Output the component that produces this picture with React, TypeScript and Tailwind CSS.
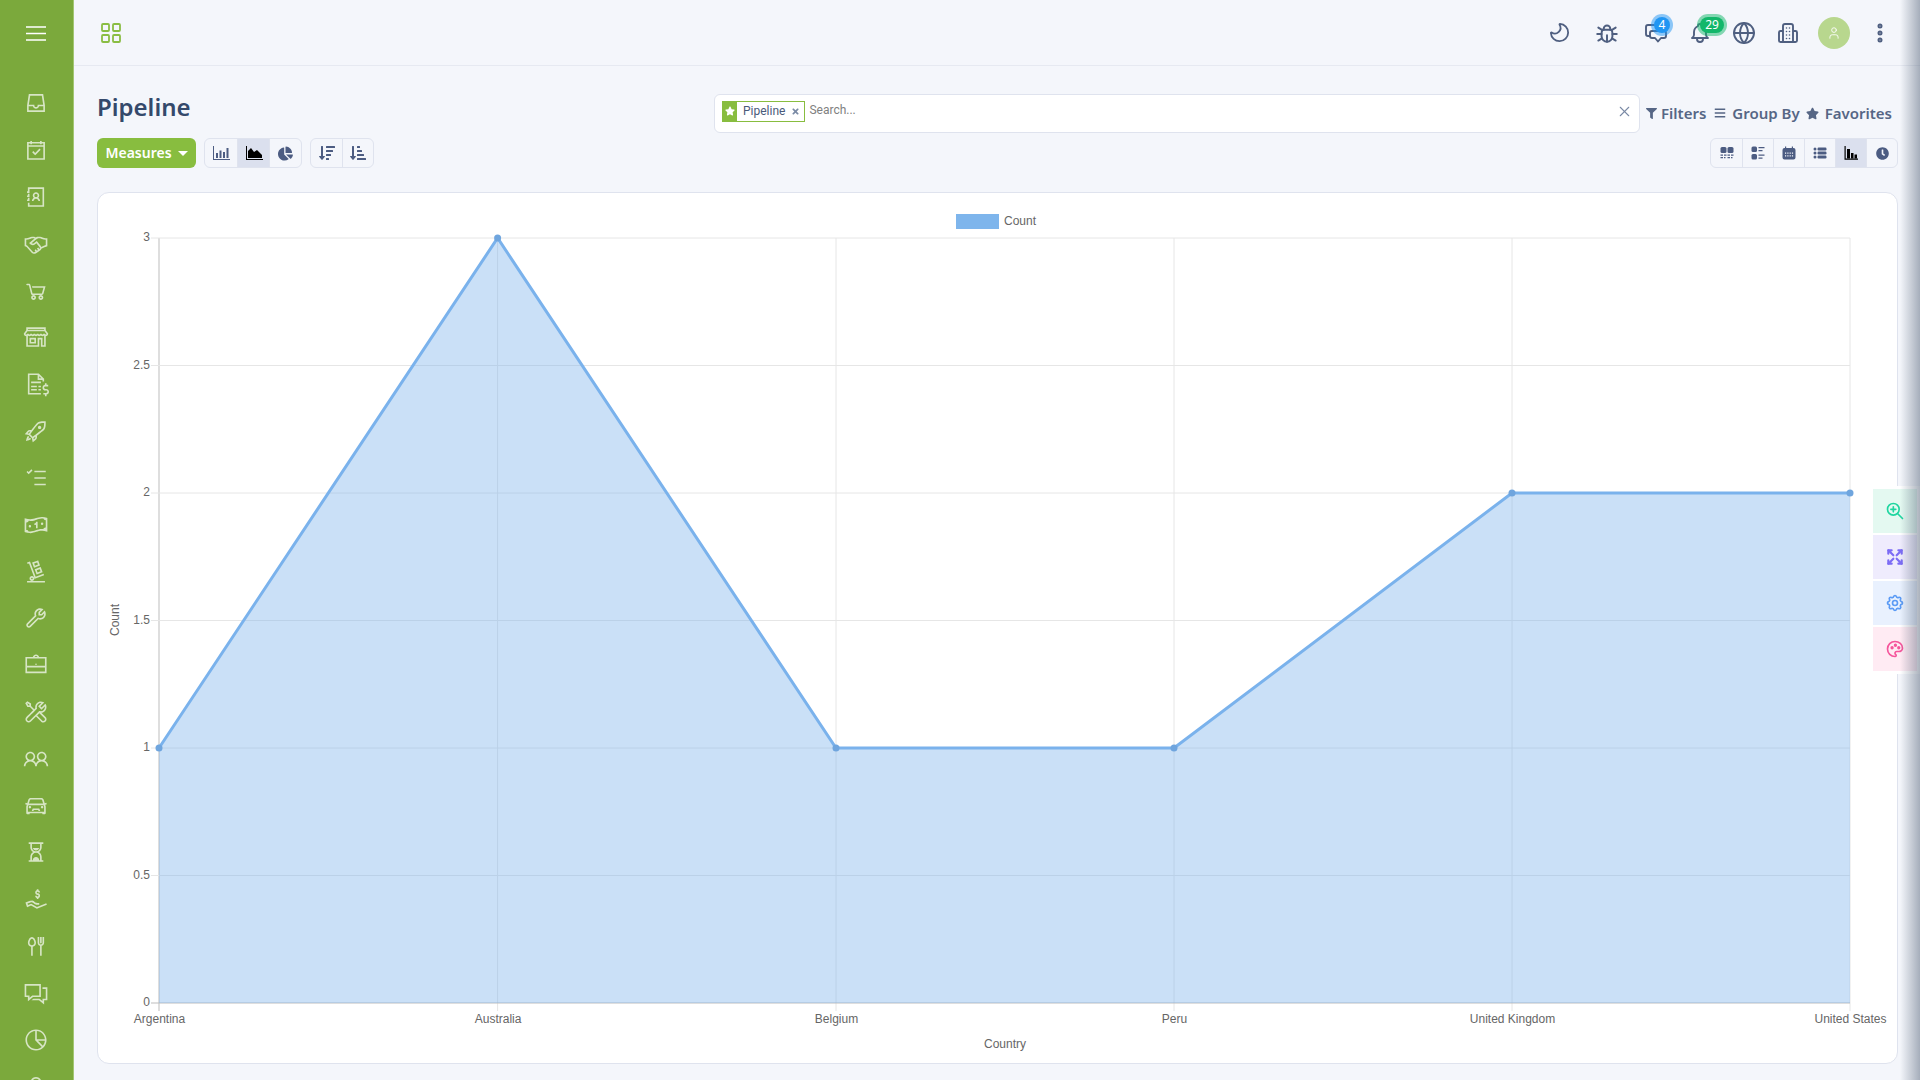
import React from "react";
import { LayoutGrid, X, Moon, Globe, User, EllipsisVertical } from "lucide-react";
import { TbBug, TbBell, TbZoomIn, TbArrowsMaximize, TbSettings, TbPalette } from "react-icons/tb";
import {
  LiaInboxSolid, LiaCalendarCheck, LiaAddressBook, LiaHandshake, LiaShoppingCartSolid, LiaStoreAltSolid,
  LiaFileInvoiceDollarSolid, LiaRocketSolid, LiaTasksSolid, LiaMoneyBillWaveAltSolid, LiaDollySolid,
  LiaWrenchSolid, LiaBriefcaseSolid, LiaToolsSolid, LiaUserFriendsSolid, LiaCarSolid, LiaHourglassHalfSolid,
  LiaHandHoldingUsdSolid, LiaUtensilsSolid, LiaComments, LiaChartPieSolid, LiaUser,
} from "react-icons/lia";
import { FaChartPie, FaSortAmountDown, FaSortAmountDownAlt, FaFilter, FaBars, FaStar, FaTimes, FaClock } from "react-icons/fa";

const navIcons = [
  LiaInboxSolid, LiaCalendarCheck, LiaAddressBook, LiaHandshake, LiaShoppingCartSolid, LiaStoreAltSolid,
  LiaFileInvoiceDollarSolid, LiaRocketSolid, LiaTasksSolid, LiaMoneyBillWaveAltSolid, LiaDollySolid,
  LiaWrenchSolid, LiaBriefcaseSolid, LiaToolsSolid, LiaUserFriendsSolid, LiaCarSolid, LiaHourglassHalfSolid,
  LiaHandHoldingUsdSolid, LiaUtensilsSolid, LiaComments, LiaChartPieSolid, LiaUser,
];

const sans = { fontFamily: '"Noto Sans", sans-serif' };

const BarIcon = () => (
  <svg width="18" height="16" viewBox="0 0 18 16" fill="currentColor">
    <path d="M1 1h1v13h16v1H1z" />
    <rect x="4" y="8" width="2" height="5" />
    <rect x="7.5" y="5.5" width="2" height="7.5" />
    <rect x="11" y="7" width="2" height="6" />
    <rect x="14.5" y="3" width="2" height="10" />
  </svg>
);
const AreaIcon = () => (
  <svg width="18" height="16" viewBox="0 0 18 16" fill="currentColor">
    <path d="M1 1h1v13h16v1H1z" />
    <path d="M3 13V6l3-3 3 4 3-2 4 4 1 1v3z" />
  </svg>
);
const KanbanIcon = () => (
  <svg width="14" height="14" viewBox="0 0 14 14" fill="currentColor">
    <rect x="0.5" y="1" width="6" height="6" rx="1.5" />
    <rect x="7.5" y="1" width="6" height="6" rx="1.5" />
    <path d="M0.5 8.500h2.500v1.200H.5zM4 8.500h2.500v1.200H4zM7.500 8.500H10v1.200H7.500zM11 8.500h2.500v1.200H11zM0.500 11h2.500v1.200H.5zM4 11h1.500v1.200H4zM7.500 11H10v1.200H7.500zM11 11h1.500v1.200H11z" />
  </svg>
);
const ListKanbanIcon = () => (
  <svg width="14" height="14" viewBox="0 0 14 14" fill="currentColor">
    <rect x="0.5" y="0.5" width="5.5" height="5.5" rx="1.5" />
    <rect x="0.5" y="8" width="5.5" height="5.5" rx="1.5" />
    <path d="M7.500 1h6v1.300h-6zM7.500 4h4v1.300h-4zM7.500 8.500h6v1.300h-6zM7.500 11.500h4v1.300h-4z" />
  </svg>
);
const CalendarIcon = () => (
  <svg width="14" height="14" viewBox="0 0 14 14" fill="currentColor">
    <path d="M3 0.500h1.200v1.500h5.600V.5H11V2h.5A2 2 0 0 1 13.500 4v7.500a2 2 0 0 1-2 2h-9a2 2 0 0 1-2-2V4a2 2 0 0 1 2-2H3z" />
    <path d="M3 6.500h1.200v1.200H3zM5.300 6.500h1.200v1.200H5.300zM7.600 6.500h1.200v1.200H7.600zM9.900 6.500h1.200v1.200H9.900zM3 9.300h1.200v1.200H3zM5.300 9.300h1.200v1.200H5.300zM7.600 9.300h1.200v1.200H7.600zM9.900 9.300h1.200v1.200H9.900z" fill="#f4f6fb" />
  </svg>
);
const RowsIcon = () => (
  <svg width="14" height="14" viewBox="0 0 14 14" fill="currentColor">
    <rect x="0.5" y="1.5" width="3" height="3" rx="1.5" />
    <rect x="0.5" y="5.5" width="3" height="3" rx="1.5" />
    <rect x="0.5" y="9.5" width="3" height="3" rx="1.5" />
    <rect x="4.5" y="1.5" width="9" height="3" rx="1.2" />
    <rect x="4.5" y="5.5" width="9" height="3" rx="1.2" />
    <rect x="4.5" y="9.5" width="9" height="3" rx="1.2" />
  </svg>
);
const GraphIcon = () => (
  <svg width="14" height="14" viewBox="0 0 14 14" fill="currentColor">
    <path d="M0.500 0h1.200v12.500H14v1.200H.5z" />
    <rect x="3" y="3" width="3" height="9.5" />
    <rect x="7" y="7" width="2.5" height="5.5" />
    <rect x="10.5" y="8.5" width="2.5" height="4" />
  </svg>
);
const BuildingIcon = () => (
  <svg width="24" height="24" viewBox="0 0 24 24" fill="none" stroke="currentColor" strokeWidth="1.9" strokeLinejoin="round">
    <path d="M7 21V5a2 2 0 0 1 2-2h6a2 2 0 0 1 2 2v16" />
    <path d="M7 10H4.500A1.500 1.500 0 0 0 3 11.500V19.500A1.500 1.500 0 0 0 4.500 21h15a1.500 1.500 0 0 0 1.500-1.500v-8a1.500 1.500 0 0 0-1.500-1.500H17" />
    <path d="M10.500 7h.01M13.500 7h.01M10.500 10.500h.01M13.500 10.500h.01M10.500 14h.01M13.500 14h.01M10.500 17.500h.01M13.500 17.500h.01" strokeLinecap="round" strokeWidth="1.600" />
  </svg>
);
const ChatIcon = () => (
  <svg width="24" height="24" viewBox="0 0 24 24" fill="none" stroke="currentColor" strokeWidth="1.9" strokeLinejoin="round" strokeLinecap="round">
    <path d="M15 4H4a2 2 0 0 0-2 2v7a2 2 0 0 0 2 2h2" />
    <path d="M8 10h12a2 2 0 0 1 2 2v3a2 2 0 0 1-2 2h-3l-3 3.500-3-3.500H8a2 2 0 0 1-2-2v-3a2 2 0 0 1 2-2z" />
  </svg>
);

function Sidebar() {
  return (
    <aside className="w-[74px] shrink-0 bg-[#7ba93c] border-r border-[#a3c673] flex flex-col items-stretch overflow-hidden">
      <div className="h-[66px] shrink-0 flex items-center justify-center pr-0.5">
        <svg width="20" height="15" viewBox="0 0 20 15" className="text-white">
          <path d="M0 1h20M0 7.500h20M0 14h20" stroke="currentColor" strokeWidth="1.600" />
        </svg>
      </div>
      <nav className="mt-3.5 h-[1030px] shrink-0 flex flex-col pr-px">
        {navIcons.map((I, i) => (
          <div key={i} className="flex-1 flex items-center justify-center text-white/70">
            <I size={26} />
          </div>
        ))}
      </nav>
    </aside>
  );
}

function Header() {
  return (
    <header className="h-[66px] shrink-0 border-b border-[#e6e9f1] flex items-center pl-6 pr-7">
      <LayoutGrid size={24} strokeWidth={1.8} className="text-[#8abd43] ml-px" />
      <div className="ml-auto flex items-center gap-5 text-[#4f5f80]">
        <Moon size={23} strokeWidth={1.9} className="mr-1 -scale-x-100" />
        <TbBug size={26} strokeWidth={1.8} className="mr-1 -ml-px" />
        <div className="relative">
          <ChatIcon />
          <span className="absolute -top-1 left-2.5 w-4 h-4 rounded-full bg-[#2196f3] ring-3 ring-[#2196f3]/50 text-white text-xs flex items-center justify-center">4</span>
        </div>
        <div className="relative">
          <TbBell size={24} strokeWidth={1.9} />
          <span className="absolute -top-1 left-3 w-6 h-4 rounded-full bg-[#12b76a] ring-3 ring-[#12b76a]/50 text-white text-xs flex items-center justify-center">29</span>
        </div>
        <Globe size={24} strokeWidth={1.9} />
        <BuildingIcon />
        <div className="w-8 h-8 -ml-0.5 rounded-full bg-[#b8d78e] flex items-center justify-center text-white">
          <User size={14} strokeWidth={1.5} />
        </div>
        <EllipsisVertical size={24} strokeWidth={3} className="-ml-0.5" />
      </div>
    </header>
  );
}

function BtnGroup({ items, active, w }: { items: React.ReactNode[]; active: number; w: string }) {
  return (
    <div className="flex h-[30px] rounded-md border border-[#dfe3ee] overflow-hidden">
      {items.map((it, i) => (
        <div key={i} className={`${w} flex items-center justify-center border-l first:border-l-0 border-[#dfe3ee] ${i === active ? "bg-[#dbe0ee] text-black" : "text-[#4c5c82]"}`}>
          {it}
        </div>
      ))}
    </div>
  );
}

function Toolbar() {
  return (
    <div className="grid grid-cols-[617px_1fr] gap-y-1.5">
      <div className="flex items-center h-[38px] pb-3 text-2xl font-semibold text-[#34496b]" style={sans}>Pipeline</div>
      <div className="flex items-center h-[38px]">
        <div className="w-[926px] h-[39px] rounded-md bg-white border border-[#dfe3ee] flex items-start pt-[6px] pl-[7px] pr-1.5 text-xs" style={{ fontFamily: "Roboto, sans-serif" }}>
          <div className="h-[21px] flex items-center border border-[#88bd3f] bg-white">
            <span className="w-3.5 h-full bg-[#88bd3f] flex items-center justify-center text-white"><FaStar size={10} /></span>
            <span className="pl-1.5 text-[#4a5a7a]">Pipeline</span>
            <FaTimes size={9} className="ml-1.5 mr-1 text-[#7a8aa5]" />
          </div>
          <span className="ml-1 mt-px text-[#808080]">Search...</span>
          <X size={17} strokeWidth={1.5} className="ml-auto mt-0.5 text-[#7a8aa5]" />
        </div>
        <div className="ml-auto mr-1.5 flex items-center gap-1.5 text-[15px] font-semibold text-[#566685]" style={sans}>
          <span className="flex items-center gap-1 mr-0.5"><FaFilter size={11} />Filters</span>
          <span className="flex items-center gap-1.5"><FaBars size={12} />Group By</span>
          <span className="flex items-center gap-1.5"><FaStar size={13} />Favorites</span>
        </div>
      </div>
      <div className="flex gap-2">
        <div className="w-[99px] h-[30px] rounded-md bg-[#88bd3f] text-white text-sm font-semibold flex items-center justify-center gap-1.5" style={sans}>
          Measures
          <span className="w-0 h-0 border-x-[5px] border-x-transparent border-t-[5px] border-t-white" />
        </div>
        <BtnGroup w="w-8" active={1} items={[<BarIcon />, <AreaIcon />, <FaChartPie size={15} />]} />
        <BtnGroup w="w-[31px]" active={-1} items={[<FaSortAmountDown size={16} />, <FaSortAmountDownAlt size={16} />]} />
      </div>
      <div className="flex justify-end">
        <BtnGroup w="w-[31px]" active={4} items={[<KanbanIcon />, <ListKanbanIcon />, <CalendarIcon />, <RowsIcon />, <GraphIcon />, <FaClock size={13} />]} />
      </div>
    </div>
  );
}

const xs = [159, 497.6, 836, 1174, 1512, 1850];
const labels = ["Argentina", "Australia", "Belgium", "Peru", "United Kingdom", "United States"];
const data = [1, 3, 1, 1, 2, 2];
const y = (v: number) => 1003 - v * 255;
const ticks = ["0", "0.5", "1", "1.5", "2", "2.5", "3"];

function Chart() {
  const line = xs.map((x, i) => `${x},${y(data[i])}`).join(" ");
  return (
    <svg viewBox="98 193 1799 870" className="w-full h-full block" style={{ fontFamily: '"Liberation Sans", sans-serif' }}>
      {xs.map((x, i) => (
        <line key={x} x1={x} x2={x} y1={238} y2={1011} stroke={i === 0 ? "#bdbdbd" : "#e6e6e6"} />
      ))}
      {ticks.map((t, i) => (
        <g key={t}>
          <line x1={151} x2={1850} y1={y(i * 0.5)} y2={y(i * 0.5)} stroke={i === 0 ? "#bdbdbd" : "#e6e6e6"} />
          <text x={150} y={y(i * 0.5) + 3} textAnchor="end" fontSize="12" fill="#666">{t}</text>
        </g>
      ))}
      <polygon points={`159,1003 ${line} 1850,1003`} fill="#7ab2ec" fillOpacity="0.4" />
      <polyline points={line} fill="none" stroke="#7ab2ec" strokeWidth="3" />
      {xs.map((x, i) => (
        <circle key={x} cx={x} cy={y(data[i])} r="3.5" fill="#6fa5de" />
      ))}
      {xs.map((x, i) => (
        <text key={x} x={x + 0.5} y={1023} textAnchor="middle" fontSize="12" fill="#666">{labels[i]}</text>
      ))}
      <text x={1005} y={1048} textAnchor="middle" fontSize="12" fill="#666">Country</text>
      <text transform="translate(119 620) rotate(-90)" textAnchor="middle" fontSize="12" fill="#666">Count</text>
      <rect x={956} y={214} width={43} height={15} fill="#7eb5ec" />
      <text x={1004} y={225} fontSize="12" fill="#666">Count</text>
    </svg>
  );
}

function FloatingPanel() {
  const items = [
    { bg: "bg-[#e4f9f1]", c: "text-[#1fd6a0]", I: TbZoomIn, s: 2 },
    { bg: "bg-[#efecfd]", c: "text-[#7c6cf5]", I: TbArrowsMaximize, s: 2.6 },
    { bg: "bg-[#e9f1fe]", c: "text-[#5b9bf5]", I: TbSettings, s: 2 },
    { bg: "bg-[#ffebf3]", c: "text-[#f5559b]", I: TbPalette, s: 2 },
  ];
  return (
    <div className="absolute right-0 top-[486px] w-[50px] rounded-l-lg bg-white p-[3px] flex flex-col gap-0.5">
      {items.map(({ bg, c, I, s }, i) => (
        <div key={i} className={`${bg} ${c} h-11 flex items-center justify-center`}>
          <I size={20} strokeWidth={s} />
        </div>
      ))}
    </div>
  );
}

export default function App() {
  return (
    <div className="relative h-screen w-full flex overflow-hidden bg-[#f4f6fb]">
      <Sidebar />
      <div className="flex-1 min-w-0 flex flex-col">
        <Header />
        <main className="flex-1 min-h-0 flex flex-col pt-7 pl-[23px] pr-5.5 pb-4">
          <Toolbar />
          <div className="mt-6 flex-1 min-h-0 rounded-xl bg-white border border-[#dfe3ee]">
            <Chart />
          </div>
        </main>
      </div>
      <FloatingPanel />
      <div className="absolute inset-y-0 right-0 w-5 bg-linear-to-r from-transparent to-slate-600/45" />
    </div>
  );
}
